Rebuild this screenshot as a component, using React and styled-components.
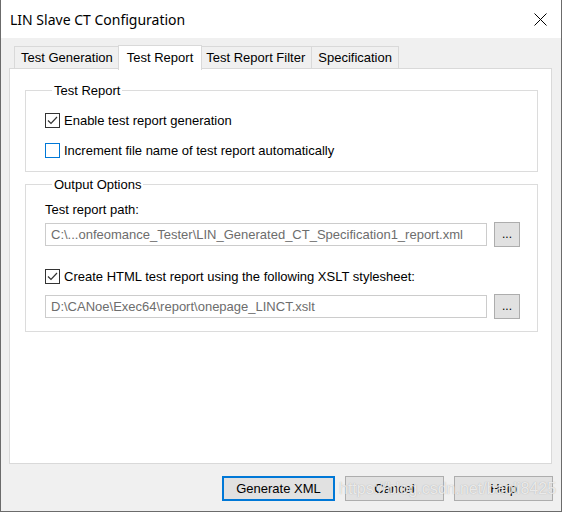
import React from 'react';
import styled, { createGlobalStyle } from 'styled-components';

const GlobalStyle = createGlobalStyle`
    html, body {
        margin: 0;
        padding: 0;
        background: #ffffff;
    }
    * {
        box-sizing: border-box;
    }
`;

const Window = styled.div`
    width: 562px;
    height: 512px;
    display: flex;
    flex-direction: column;
    background: #f0f0f0;
    border: 1px solid #6b6b6b;
    border-top: none;
    font-family: "Liberation Sans", Arial, sans-serif;
    font-size: 13px;
    color: #000;
    position: relative;
    overflow: hidden;
`;

const TitleBar = styled.div`
    height: 38px;
    background: #ffffff;
    display: flex;
    align-items: center;
    justify-content: space-between;
    padding: 0 0 0 9px;
`;

const Title = styled.div`
    font-family: "Noto Sans", "Liberation Sans", sans-serif;
    font-size: 14px;
    color: #000;
    padding-top: 1px;
`;

const CloseButton = styled.div`
    width: 30px;
    height: 38px;
    margin-right: 6px;
    display: flex;
    align-items: center;
    justify-content: center;
`;

const Body = styled.div`
    flex: 1;
    display: flex;
    flex-direction: column;
    padding: 7px 9px 8px 8px;
`;

const TabStrip = styled.div`
    display: flex;
    align-items: flex-end;
    height: 24px;
    padding-left: 5px;
    position: relative;
    z-index: 1;
`;

const Tab = styled.div`
    height: ${({ $active }) => ($active ? '25px' : '23px')};
    padding: ${({ $active }) => ($active ? '0 8px 2px' : '0 6px')};
    margin: ${({ $active }) => ($active ? '0 -2px -1px' : '0 0 0 -1px')};
    background: ${({ $active }) => ($active ? '#ffffff' : '#f0f0f0')};
    border: 1px solid #d9d9d9;
    border-bottom: ${({ $active }) => ($active ? 'none' : '1px solid #d9d9d9')};
    display: flex;
    align-items: center;
    white-space: nowrap;
    position: relative;
    z-index: ${({ $active }) => ($active ? 2 : 1)};
    &:first-child {
        margin-left: 0;
    }
`;

const Panel = styled.div`
    height: 396px;
    background: #ffffff;
    border: 1px solid #d9d9d9;
    margin-top: -1px;
    padding: 14px 13px 0 15px;
    display: flex;
    flex-direction: column;
    gap: 5px;
`;

const Group = styled.fieldset`
    margin: 0;
    padding: 0 0 0 19px;
    border: 1px solid #dcdcdc;
    height: ${({ $h }) => $h}px;
    min-width: 0;
    display: flex;
    flex-direction: column;
`;

const Legend = styled.legend`
    padding: 0 2px;
    margin-left: 7px;
    line-height: 15px;
    font-size: 13px;
`;

const CheckRow = styled.label`
    display: flex;
    align-items: center;
    gap: 4px;
    height: 16px;
    margin-top: ${({ $mt }) => $mt}px;
    white-space: nowrap;
`;

const Box = styled.span`
    width: 15px;
    height: 15px;
    flex: none;
    border: 1px solid ${({ $focus }) => ($focus ? '#0078d7' : '#333333')};
    background: #ffffff;
    display: flex;
    align-items: center;
    justify-content: center;
`;

const FieldLabel = styled.div`
    margin-top: 10px;
    line-height: 15px;
`;

const PathRow = styled.div`
    display: flex;
    align-items: center;
    gap: 7px;
    margin-top: ${({ $mt }) => $mt}px;
    padding-right: 16px;
`;

const PathInput = styled.div`
    width: 442px;
    height: 23px;
    border: 1px solid #cccccc;
    background: #ffffff;
    color: #6d6d6d;
    padding-left: 5px;
    display: flex;
    align-items: center;
    white-space: nowrap;
    overflow: hidden;
`;

const BrowseButton = styled.div`
    width: 26px;
    height: 25px;
    border: 1px solid #adadad;
    background: #e1e1e1;
    display: flex;
    align-items: center;
    justify-content: center;
    padding-bottom: 2px;
    font-size: 12px;
`;

const Footer = styled.div`
    display: flex;
    justify-content: flex-end;
    gap: 10px;
    margin-top: 12px;
    margin-right: -1px;
`;

const Button = styled.div`
    width: ${({ $w }) => $w}px;
    height: 25px;
    background: #e1e1e1;
    border: ${({ $primary }) => ($primary ? '2px solid #0078d7' : '1px solid #adadad')};
    display: flex;
    align-items: center;
    justify-content: center;
    font-size: 13px;
`;

const Watermark = styled.div`
    position: absolute;
    left: 338px;
    top: 480px;
    font-family: "Liberation Sans", Arial, sans-serif;
    font-size: 16px;
    color: rgba(255, 255, 255, 0.75);
    text-shadow: 0 0 1px rgba(120, 120, 120, 0.6);
    pointer-events: none;
    white-space: nowrap;
`;

const Check = () => (
    <svg width="11" height="9" viewBox="0 0 11 9">
        <path d="M1 4.5 L4 7.5 L10 1" fill="none" stroke="#333" strokeWidth="1.2" />
    </svg>
);

const Checkbox = ({ checked, focus, label, mt }) => (
    <CheckRow $mt={mt}>
        <Box $focus={focus}>{checked && <Check />}</Box>
        {label}
    </CheckRow>
);

const tabs = ['Test Generation', 'Test Report', 'Test Report Filter', 'Specification'];

export default function App() {
    return (
        <>
            <GlobalStyle />
            <Window>
                <TitleBar>
                    <Title>LIN Slave CT Configuration</Title>
                    <CloseButton>
                        <svg width="13" height="13" viewBox="0 0 13 13">
                            <path d="M0.5 0.5 L12.5 12.5 M12.5 0.5 L0.5 12.5" stroke="#000" strokeWidth="1" />
                        </svg>
                    </CloseButton>
                </TitleBar>
                <Body>
                    <TabStrip>
                        {tabs.map((t) => (
                            <Tab key={t} $active={t === 'Test Report'}>{t}</Tab>
                        ))}
                    </TabStrip>
                    <Panel>
                        <Group $h={89}>
                            <Legend>Test Report</Legend>
                            <Checkbox checked label="Enable test report generation" mt={14} />
                            <Checkbox focus label="Increment file name of test report automatically" mt={14} />
                        </Group>
                        <Group $h={155}>
                            <Legend>Output Options</Legend>
                            <FieldLabel>Test report path:</FieldLabel>
                            <PathRow $mt={5}>
                                <PathInput>C:\...onfeomance_Tester\LIN_Generated_CT_Specification1_report.xml</PathInput>
                                <BrowseButton>...</BrowseButton>
                            </PathRow>
                            <Checkbox checked label="Create HTML test report using the following XSLT stylesheet:" mt={21} />
                            <PathRow $mt={10}>
                                <PathInput>D:\CANoe\Exec64\report\onepage_LINCT.xslt</PathInput>
                                <BrowseButton>...</BrowseButton>
                            </PathRow>
                        </Group>
                    </Panel>
                    <Footer>
                        <Button $primary $w={113}>Generate XML</Button>
                        <Button $w={99}>Cancel</Button>
                        <Button $w={99}>Help</Button>
                    </Footer>
                </Body>
                <Watermark>https://blog.csdn.net/baoli8425</Watermark>
            </Window>
        </>
    );
}
